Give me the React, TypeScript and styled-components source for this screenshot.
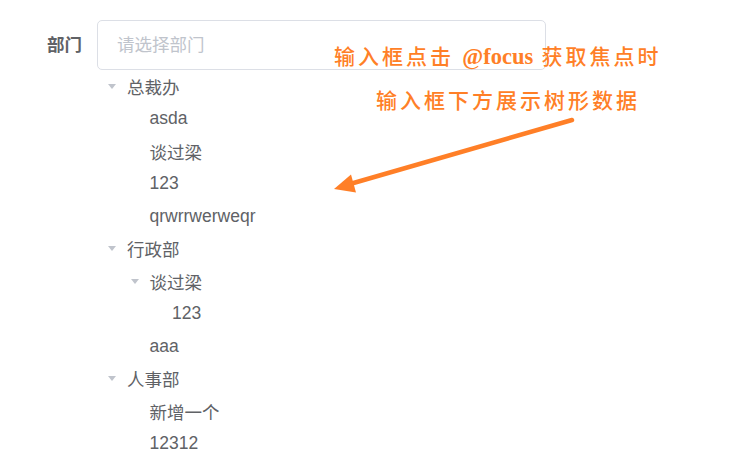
import React from "react";
import styled, { createGlobalStyle } from "styled-components";

const Global = createGlobalStyle`
  html, body { margin: 0; padding: 0; background: #fff; }
  body { font-family: "Liberation Sans", "Noto Sans CJK SC", sans-serif; }
`;

const Page = styled.div`
  position: relative;
  width: 737px;
  height: 449px;
  overflow: hidden;
  padding: 20px 0 0 47px;
  box-sizing: border-box;
`;

const FormItem = styled.div`
  display: flex;
  align-items: flex-start;
`;

const Label = styled.label`
  width: 50px;
  height: 50px;
  line-height: 50px;
  font-size: 17.5px;
  font-weight: bold;
  color: #606266;
  font-family: "Liberation Sans", "Noto Sans CJK SC", sans-serif;
`;

const Field = styled.div`
  display: flex;
  flex-direction: column;
  width: 449px;
`;

const Input = styled.input`
  box-sizing: border-box;
  width: 449px;
  height: 50px;
  border: 1px solid #dcdfe6;
  border-radius: 5px;
  padding: 0 19px;
  font-size: 17.5px;
  color: #606266;
  outline: none;
  font-family: "Liberation Sans", "Noto Sans CJK SC", sans-serif;
  &::placeholder { color: #c0c4cc; }
`;

const TreeList = styled.div`
  display: flex;
  flex-direction: column;
`;

const Node = styled.div<{ $level: number }>`
  display: flex;
  align-items: center;
  height: 32.5px;
  padding-left: ${(p) => p.$level * 22.5}px;
  font-size: 17.5px;
  color: #606266;
`;

const Caret = styled.span<{ $leaf?: boolean }>`
  display: flex;
  align-items: center;
  justify-content: center;
  width: 30px;
  height: 100%;
  &::before {
    content: "";
    display: ${(p) => (p.$leaf ? "none" : "block")};
    width: 0;
    height: 0;
    border-left: 4.5px solid transparent;
    border-right: 4.5px solid transparent;
    border-top: 5px solid #c0c4cc;
  }
`;

const NodeLabel = styled.span`
  white-space: nowrap;
`;

const Note = styled.div`
  position: absolute;
  left: 334px;
  top: 35px;
  display: flex;
  flex-direction: column;
  color: #ff7f27;
  font-family: "Liberation Serif", "Noto Sans CJK SC", serif;
  font-size: 21px;
  font-weight: 500;
  letter-spacing: 3px;
  line-height: 44px;
  white-space: nowrap;
`;

const NoteLine = styled.div<{ $indent?: number }>`
  margin-left: ${(p) => p.$indent ?? 0}px;
`;

const Strong = styled.b`
  font-weight: bold;
  font-size: 22.5px;
  letter-spacing: 0;
`;

const Arrow = styled.svg`
  position: absolute;
  left: 0;
  top: 0;
  pointer-events: none;
`;

type T = { label: string; level: number; leaf?: boolean };
const nodes: T[] = [
  { label: "总裁办", level: 0 },
  { label: "asda", level: 1, leaf: true },
  { label: "谈过梁", level: 1, leaf: true },
  { label: "123", level: 1, leaf: true },
  { label: "qrwrrwerweqr", level: 1, leaf: true },
  { label: "行政部", level: 0 },
  { label: "谈过梁", level: 1 },
  { label: "123", level: 2, leaf: true },
  { label: "aaa", level: 1, leaf: true },
  { label: "人事部", level: 0 },
  { label: "新增一个", level: 1, leaf: true },
  { label: "12312", level: 1, leaf: true },
];

export default function App() {
  return (
    <Page>
      <Global />
      <FormItem>
        <Label>部门</Label>
        <Field>
          <Input placeholder="请选择部门" />
          <TreeList>
            {nodes.map((n, i) => (
              <Node key={i} $level={n.level}>
                <Caret $leaf={n.leaf} />
                <NodeLabel>{n.label}</NodeLabel>
              </Node>
            ))}
          </TreeList>
        </Field>
      </FormItem>
      <Note>
        <NoteLine>
          输入框点击 <Strong>@focus</Strong> 获取焦点时
        </NoteLine>
        <NoteLine $indent={42}>输入框下方展示树形数据</NoteLine>
      </Note>
      <Arrow width="737" height="449" viewBox="0 0 737 449">
        <line x1="572" y1="120" x2="350" y2="184" stroke="#ff7f27" strokeWidth="4.5" strokeLinecap="round" />
        <polygon points="334,189 351,174.5 356,192.5" fill="#ff7f27" />
      </Arrow>
    </Page>
  );
}
